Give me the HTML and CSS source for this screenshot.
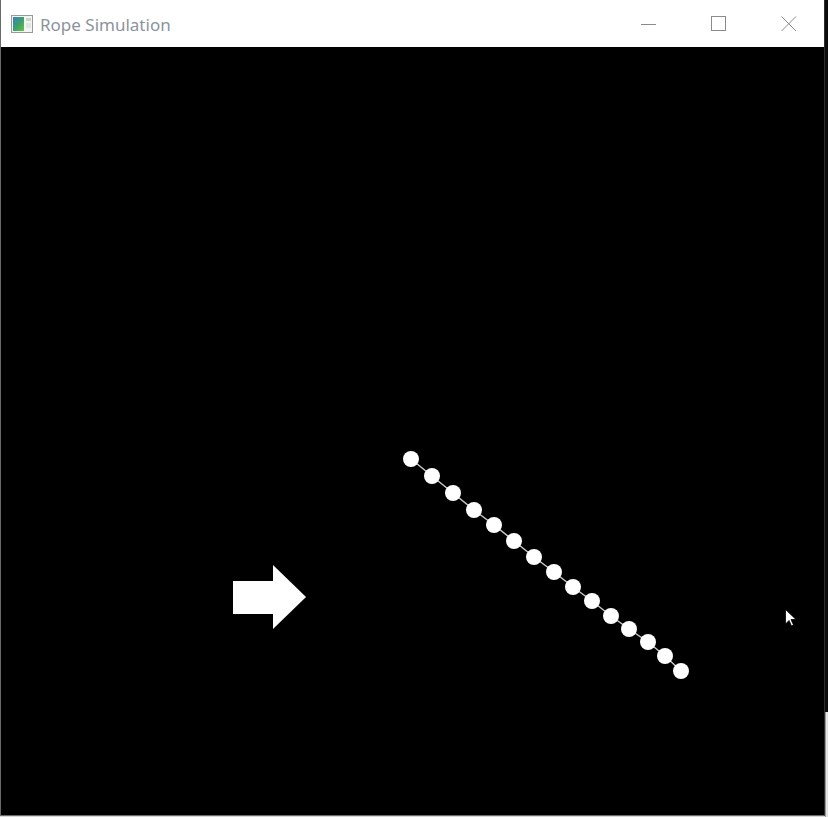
FILE: index.html
```html
<!DOCTYPE html>
<html>
<head>
<meta charset="utf-8">
<title>Rope Simulation</title>
<link rel="stylesheet" href="styles.css">
</head>
<body>
<div class="desktop">
  <div class="window">
    <div class="titlebar">
      <svg class="app-icon" width="22" height="18" viewBox="0 0 22 18">
        <defs>
          <linearGradient id="g" x1="0" y1="0" x2="1" y2="1">
            <stop offset="0" stop-color="#3f7fc0"/>
            <stop offset="0.5" stop-color="#3aa070"/>
            <stop offset="1" stop-color="#6cc040"/>
          </linearGradient>
        </defs>
        <rect x="0.5" y="0.5" width="21" height="17" fill="#f4f4f4" stroke="#9a9a9a"/>
        <rect x="2" y="2" width="11" height="14" fill="url(#g)"/>
        <rect x="15" y="3" width="5" height="3" fill="#c8d8c0"/>
        <rect x="15" y="8" width="5" height="5" fill="#e0e6e0"/>
      </svg>
      <span class="title">Rope Simulation</span>
      <div class="controls">
        <div class="btn">
          <svg width="16" height="16" viewBox="0 0 16 16"><line x1="0" y1="8.5" x2="15" y2="8.5" stroke="#8a8a8a" stroke-width="1"/></svg>
        </div>
        <div class="btn">
          <svg width="16" height="16" viewBox="0 0 16 16"><rect x="0.5" y="0.5" width="14" height="14" fill="none" stroke="#8a8a8a" stroke-width="1"/></svg>
        </div>
        <div class="btn">
          <svg width="16" height="16" viewBox="0 0 16 16"><path d="M0.5 0.5 L15 15 M15 0.5 L0.5 15" stroke="#8a8a8a" stroke-width="1"/></svg>
        </div>
      </div>
    </div>
    <div class="canvas">
      <svg class="scene" width="823" height="768" viewBox="1 47 823 768">
        <polygon points="233,581 273,581 273,565 306,597 273,629 273,614 233,614" fill="#ffffff"/>
        <polyline points="411,459 432,476 453,493 474,510 494,525 514,541 534,557 554,572 573,587 592,601 611,616 629,629 648,642 665,656 681,671" fill="none" stroke="#c8c8c8" stroke-width="1.5"/>
        <g fill="#ffffff">
          <circle cx="411" cy="459" r="8"/>
          <circle cx="432" cy="476" r="8"/>
          <circle cx="453" cy="493" r="8"/>
          <circle cx="474" cy="510" r="8"/>
          <circle cx="494" cy="525" r="8"/>
          <circle cx="514" cy="541" r="8"/>
          <circle cx="534" cy="557" r="8"/>
          <circle cx="554" cy="572" r="8"/>
          <circle cx="573" cy="587" r="8"/>
          <circle cx="592" cy="601" r="8"/>
          <circle cx="611" cy="616" r="8"/>
          <circle cx="629" cy="629" r="8"/>
          <circle cx="648" cy="642" r="8"/>
          <circle cx="665" cy="656" r="8"/>
          <circle cx="681" cy="671" r="8"/>
        </g>
        <path d="M785.5 609.5 L785.5 624 L789 620.5 L791.5 626 L793.5 625 L791 619.5 L796 619.5 Z" fill="#ffffff" stroke="#000000" stroke-width="0.8"/>
      </svg>
    </div>
  </div>
  <div class="side">
    <div class="side-dark"></div>
    <div class="side-light"></div>
  </div>
</div>
</body>
</html>
```

FILE: styles.css
```css
html, body {
  margin: 0;
  padding: 0;
  background: #d8d8d8;
}

.desktop {
  display: flex;
  width: 828px;
  height: 817px;
  overflow: hidden;
}

.window {
  width: 823px;
  height: 815px;
  border-left: 1px solid #6a6a6a;
  border-right: 1px solid #2e2e2e;
  border-bottom: 1px solid #6a6a6a;
  display: flex;
  flex-direction: column;
  background: #000000;
  flex: none;
}

.titlebar {
  height: 47px;
  background: #ffffff;
  display: flex;
  align-items: center;
  flex: none;
}

.app-icon {
  margin-left: 10px;
  margin-right: 7px;
  margin-top: 1px;
}

.title {
  font-family: "Noto Sans", "Open Sans", sans-serif;
  font-size: 17px;
  color: #8c939c;
  margin-top: 1px;
}

.controls {
  margin-left: auto;
  display: flex;
  height: 100%;
}

.btn {
  width: 70px;
  height: 100%;
  display: flex;
  align-items: center;
  justify-content: center;
}

.canvas {
  flex: 1;
  background: #000000;
  overflow: hidden;
}

.scene {
  display: block;
}

.side {
  flex: 1;
  display: flex;
  flex-direction: column;
}

.side-dark {
  height: 712px;
  background: #0c0c0c;
}

.side-light {
  flex: 1;
  background: #e4e4e4;
  border-left: 1px solid #9a9a9a;
}
```
